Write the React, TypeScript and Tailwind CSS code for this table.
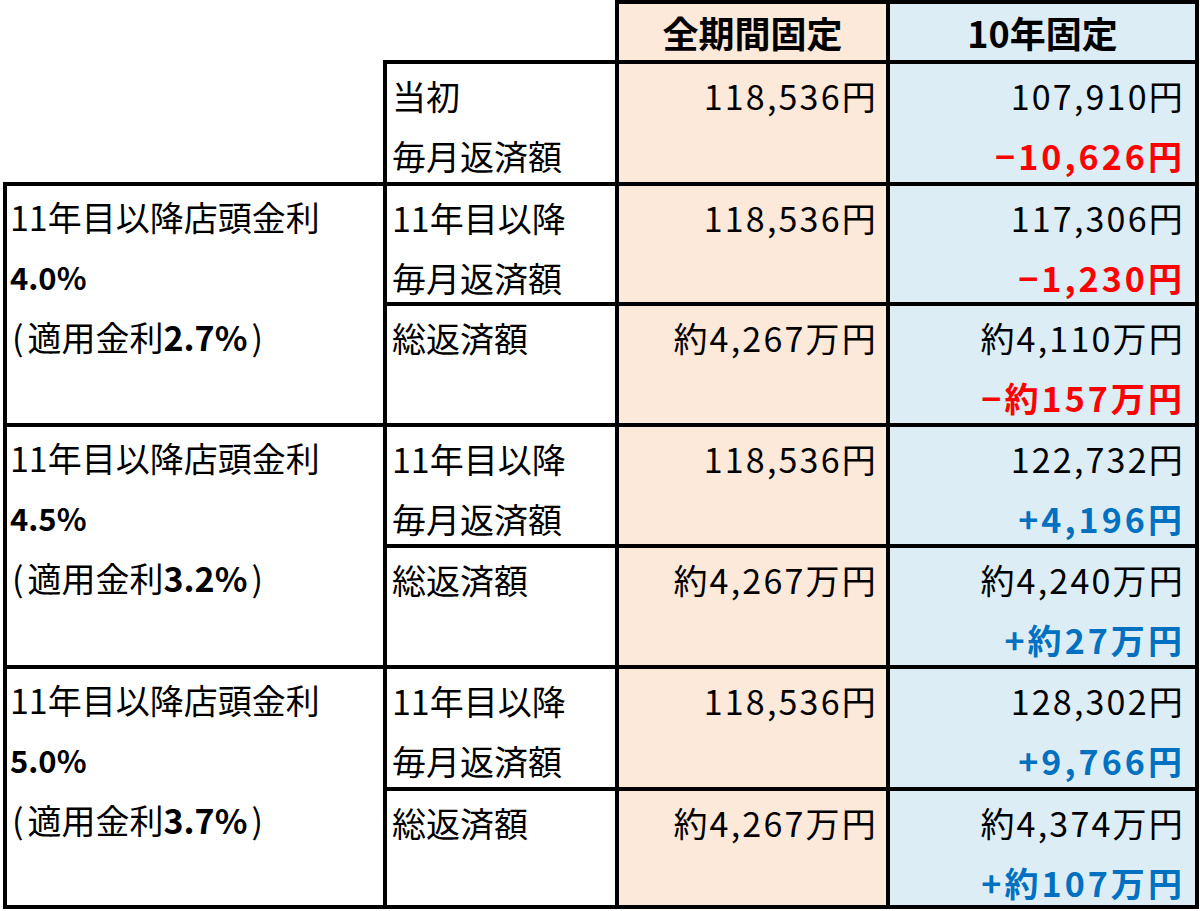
import React from "react";

// ─── Data ─────────────────────────────────────────────────────────────────────

type Tone = "red" | "blue";

interface PairRow {
  label: string[];
  fixed: string;
  tenYear: string;
  diff: string;
  tone: Tone;
}

interface Scenario {
  rate: string;
  applied: string;
  rows: PairRow[];
}

const SCENARIOS: Scenario[] = [
  {
    rate: "4.0%",
    applied: "2.7%",
    rows: [
      { label: ["11年目以降", "毎月返済額"], fixed: "118,536円", tenYear: "117,306円", diff: "−1,230円", tone: "red" },
      { label: ["総返済額"], fixed: "約4,267万円", tenYear: "約4,110万円", diff: "−約157万円", tone: "red" },
    ],
  },
  {
    rate: "4.5%",
    applied: "3.2%",
    rows: [
      { label: ["11年目以降", "毎月返済額"], fixed: "118,536円", tenYear: "122,732円", diff: "+4,196円", tone: "blue" },
      { label: ["総返済額"], fixed: "約4,267万円", tenYear: "約4,240万円", diff: "+約27万円", tone: "blue" },
    ],
  },
  {
    rate: "5.0%",
    applied: "3.7%",
    rows: [
      { label: ["11年目以降", "毎月返済額"], fixed: "118,536円", tenYear: "128,302円", diff: "+9,766円", tone: "blue" },
      { label: ["総返済額"], fixed: "約4,267万円", tenYear: "約4,374万円", diff: "+約107万円", tone: "blue" },
    ],
  },
];

// row heights (line-centre to line-centre) and matching inner box heights
const ROW_H = ["h-[120px]", "h-[121px]", "h-[121px]", "h-[121px]", "h-[122px]", "h-[118px]"];
const INNER_H = ["h-[116px]", "h-[117px]", "h-[117px]", "h-[117px]", "h-[118px]", "h-[114px]"];

const TONE: Record<Tone, string> = {
  red: "text-[#ff0000]",
  blue: "text-[#0070c0]",
};

// ─── Cells ────────────────────────────────────────────────────────────────────

const BORDER = "border-4 border-black";
const FIXED_BG = "bg-[#fde9d9]";
const TEN_BG = "bg-[#dcedf5]";

function LabelCell({ lines, inner }: { lines: string[]; inner: string }) {
  return (
    <td className={`${BORDER} align-top pl-[5px]`}>
      <div className={`${inner} pt-[2px]`}>
        {lines.map((l) => (
          <div key={l}>{l}</div>
        ))}
      </div>
    </td>
  );
}

function FixedCell({ value, inner }: { value: string; inner: string }) {
  return (
    <td className={`${BORDER} ${FIXED_BG} align-top text-right pr-[8px]`}>
      <div className={`${inner} pt-[2px] tracking-[0.065em]`}>{value}</div>
    </td>
  );
}

function TenYearCell({ value, diff, tone, inner }: { value: string; diff: string; tone: Tone; inner: string }) {
  return (
    <td className={`${BORDER} ${TEN_BG} align-top text-right pr-[10px]`}>
      <div className={`${inner} pt-[2px]`}>
        <div className="tracking-[0.065em]">{value}</div>
        <div className={`font-bold tracking-[0.09em] ${TONE[tone]}`}>{diff}</div>
      </div>
    </td>
  );
}

// ─── Main component ───────────────────────────────────────────────────────────

export default function App() {
  return (
    <div className="w-[1200px] h-[911px] overflow-hidden bg-white text-black font-['Noto_Sans_CJK_JP','Noto_Sans',sans-serif]">
      <table className="ml-[3px] table-fixed border-collapse text-[34px] leading-[60px]">
        <colgroup>
          <col className="w-[380px]" />
          <col className="w-[232px]" />
          <col className="w-[271px]" />
          <col className="w-[309px]" />
        </colgroup>
        <tbody>
          {/* Header */}
          <tr className="h-[60px]">
            <td />
            <td />
            <th className={`${BORDER} ${FIXED_BG} text-center align-middle text-[36px] font-bold leading-[56px]`}>
              全期間固定
            </th>
            <th className={`${BORDER} ${TEN_BG} text-center align-middle text-[36px] font-bold leading-[56px]`}>
              10年固定
            </th>
          </tr>

          {/* Initial monthly payment */}
          <tr className="h-[122px]">
            <td />
            <LabelCell lines={["当初", "毎月返済額"]} inner="h-[118px]" />
            <FixedCell value="118,536円" inner="h-[118px]" />
            <TenYearCell value="107,910円" diff="−10,626円" tone="red" inner="h-[118px]" />
          </tr>

          {/* Scenarios */}
          {SCENARIOS.map((s, si) =>
            s.rows.map((r, i) => {
              const idx = si * 2 + i;
              return (
                <tr key={s.rate + i} className={ROW_H[idx]}>
                  {i === 0 && (
                    <td rowSpan={2} className={`${BORDER} align-top pl-[3px]`}>
                      <div className="pt-[1px]">
                        <div>11年目以降店頭金利</div>
                        <div className="text-[31px] font-bold">{s.rate}</div>
                        <div>
                          <span className="pl-[2px] pr-[4px]">(</span>
                          適用金利<span className="font-bold">{s.applied}</span>
                          <span className="pl-[4px]">)</span>
                        </div>
                      </div>
                    </td>
                  )}
                  <LabelCell lines={r.label} inner={INNER_H[idx]} />
                  <FixedCell value={r.fixed} inner={INNER_H[idx]} />
                  <TenYearCell value={r.tenYear} diff={r.diff} tone={r.tone} inner={INNER_H[idx]} />
                </tr>
              );
            })
          )}
        </tbody>
      </table>
    </div>
  );
}
